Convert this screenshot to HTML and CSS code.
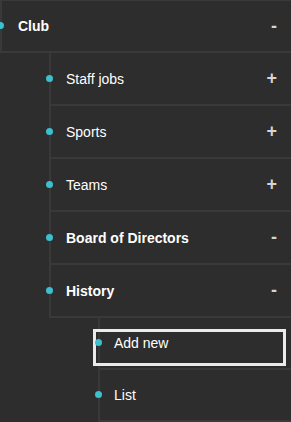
FILE: index.html
```html
<!DOCTYPE html>
<html lang="en">
<head>
    <meta charset="UTF-8">
    <meta name="viewport" content="width=device-width, initial-scale=1.0">
    <title>Club Menu</title>
    <link rel="stylesheet" href="styles.css">
</head>
<body>
    <ul class="tree">
        <li class="open">
            <div class="row"><span class="dot"></span><span class="label">Club</span><span class="toggle">-</span></div>
            <ul>
                <li><div class="row"><span class="dot"></span><span class="label">Staff jobs</span><span class="toggle">+</span></div></li>
                <li><div class="row"><span class="dot"></span><span class="label">Sports</span><span class="toggle">+</span></div></li>
                <li><div class="row"><span class="dot"></span><span class="label">Teams</span><span class="toggle">+</span></div></li>
                <li class="open"><div class="row"><span class="dot"></span><span class="label">Board of Directors</span><span class="toggle">-</span></div></li>
                <li class="open">
                    <div class="row"><span class="dot"></span><span class="label">History</span><span class="toggle">-</span></div>
                    <ul>
                        <li><div class="row focused"><span class="dot"></span><span class="label">Add new</span></div></li>
                        <li><div class="row"><span class="dot"></span><span class="label">List</span></div></li>
                    </ul>
                </li>
            </ul>
        </li>
    </ul>
</body>
</html>
```

FILE: styles.css
```css
body {
    margin: 0;
    padding: 0;
    background-color: #2d2d2d;
    font-family: "Liberation Sans", Arial, sans-serif;
    color: #fff;
}
.tree,
.tree ul {
    list-style: none;
    margin: 0;
    padding: 0;
}
.tree ul {
    padding-left: 49px;
}
.tree > li > .row {
    border-top: 1px solid #393939;
    height: 50px;
    padding-left: 16px;
}
.row {
    position: relative;
    display: flex;
    align-items: center;
    height: 51px;
    padding: 0 14px 0 15px;
    border-left: 2px solid #393939;
    border-bottom: 2px solid #393939;
    font-size: 14px;
}
.tree ul ul .row {
    height: 50px;
    padding-left: 14px;
}
.dot {
    position: absolute;
    left: -5px;
    top: 50%;
    width: 7px;
    height: 7px;
    margin-top: -4px;
    border-radius: 50%;
    background: #3cbfcf;
    z-index: 2;
}
.label {
    flex: 1;
}
.open > .row .label {
    font-weight: bold;
}
.toggle {
    font-size: 18px;
    font-weight: bold;
    color: #d4d4d4;
}
.focused::after {
    content: "";
    position: absolute;
    left: -7px;
    right: 5px;
    top: 11px;
    height: 31px;
    border: 3px solid #ebebeb;
}
```
